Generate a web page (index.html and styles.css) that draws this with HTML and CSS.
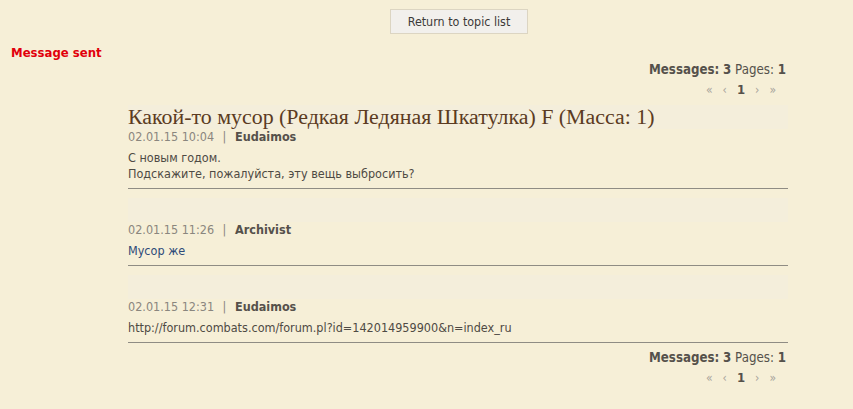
FILE: index.html
```html
<!DOCTYPE html>
<html>
<head>
<meta charset="utf-8">
<link rel="stylesheet" href="styles.css">
</head>
<body>
<div class="top">
  <button class="return">Return to topic list</button>
</div>
<div class="notice">Message sent</div>
<div class="main">
  <div class="stats"><b>Messages:</b> <b class="num">3</b> Pages: <b class="num">1</b></div>
  <div class="pager"><span>«</span><span>‹</span><b>1</b><span>›</span><span>»</span></div>
  <div class="post first">
    <h1 class="title">Какой-то мусор (Редкая Ледяная Шкатулка) F (Масса: 1)</h1>
    <div class="meta">02.01.15 10:04 <span class="sep">|</span> <b>Eudaimos</b></div>
    <div class="text">С новым годом.<br>Подскажите, пожалуйста, эту вещь выбросить?</div>
  </div>
  <div class="post">
    <div class="band"></div>
    <div class="meta">02.01.15 11:26 <span class="sep">|</span> <b>Archivist</b></div>
    <div class="text blue">Мусор же</div>
  </div>
  <div class="post">
    <div class="band"></div>
    <div class="meta">02.01.15 12:31 <span class="sep">|</span> <b>Eudaimos</b></div>
    <div class="text">http://forum.combats.com/forum.pl?id=142014959900&amp;n=index_ru</div>
  </div>
  <div class="stats"><b>Messages:</b> <b class="num">3</b> Pages: <b class="num">1</b></div>
  <div class="pager"><span>«</span><span>‹</span><b>1</b><span>›</span><span>»</span></div>
</div>
</body>
</html>
```
FILE: styles.css
```css
html, body {
  margin: 0;
  padding: 0;
}
body {
  background: #f6efd7;
  font-family: "DejaVu Sans Condensed", "DejaVu Sans", sans-serif;
  font-size: 12.5px;
  color: #4e4a44;
  width: 853px;
  height: 409px;
  overflow: hidden;
}
.top {
  display: flex;
  padding: 9px 0 0 390px;
}
.return {
  width: 138px;
  height: 25px;
  background: #f2f0ec;
  border: 1px solid #dcd5c2;
  font-family: inherit;
  font-size: 12.4px;
  color: #3c3a38;
  padding: 0;
}
.notice {
  color: #e1000b;
  font-weight: bold;
  font-size: 13px;
  padding: 11px 0 0 11px;
  line-height: 16px;
}
.main {
  width: 660px;
  margin-left: 128px;
}
.stats {
  text-align: right;
  padding-right: 2px;
  font-size: 13.2px;
  line-height: 18px;
  color: #55514b;
}
.pager {
  display: flex;
  justify-content: flex-end;
  gap: 10px;
  padding-right: 12px;
  line-height: 18px;
  color: #a8a49c;
  font-size: 12px;
  margin-top: 2px;
}
.pager b { color: #55514b; font-size: 13px; }
.post {
  border-bottom: 1px solid #8f8c84;
}
.post.first { margin-top: 6px; }
.title {
  margin: 0;
  font-family: "Liberation Serif", "DejaVu Serif", serif;
  font-weight: normal;
  font-size: 21.9px;
  line-height: 24px;
  color: #5b3b22;
  background: #f4eedb;
}
.band {
  height: 24px;
  margin-top: 9px;
  background: #f4eedb;
}
.meta {
  color: #8a867e;
  line-height: 16px;
}
.meta b { color: #55514b; }
.sep { padding: 0 5px; }
.text {
  line-height: 16px;
  margin-top: 5px;
  padding-bottom: 6px;
  color: #4e4a44;
}
.blue { color: #2d4a78; }
.post + .stats { margin-top: 6px; }
```
